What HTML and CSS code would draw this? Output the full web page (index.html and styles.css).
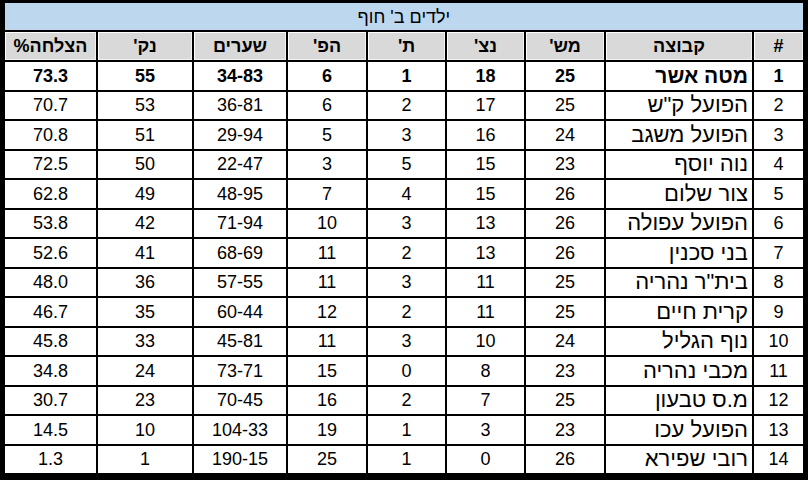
FILE: index.html
```html
<!DOCTYPE html>
<html lang="he" dir="rtl">
<head>
<meta charset="utf-8">
<title>ילדים ב' חוף</title>
<link rel="stylesheet" href="styles.css">
</head>
<body>
<table class="league">
  <colgroup>
    <col class="c-pos"><col class="c-team"><col class="c-n80"><col class="c-n79"><col class="c-n79"><col class="c-n80"><col class="c-goals"><col class="c-pts"><col class="c-pct">
  </colgroup>
  <thead>
    <tr class="title-row"><th colspan="9">ילדים ב' חוף</th></tr>
    <tr class="head-row">
      <th>#</th><th>קבוצה</th><th>מש'</th><th>נצ'</th><th>ת'</th><th>הפ'</th><th>שערים</th><th>נק'</th><th>הצלחה%</th>
    </tr>
  </thead>
  <tbody>
    <tr class="leader"><td>1</td><td class="team">מטה אשר</td><td>25</td><td>18</td><td>1</td><td>6</td><td>34-83</td><td>55</td><td>73.3</td></tr>
    <tr><td>2</td><td class="team">הפועל ק"ש</td><td>25</td><td>17</td><td>2</td><td>6</td><td>36-81</td><td>53</td><td>70.7</td></tr>
    <tr><td>3</td><td class="team">הפועל משגב</td><td>24</td><td>16</td><td>3</td><td>5</td><td>29-94</td><td>51</td><td>70.8</td></tr>
    <tr><td>4</td><td class="team">נוה יוסף</td><td>23</td><td>15</td><td>5</td><td>3</td><td>22-47</td><td>50</td><td>72.5</td></tr>
    <tr><td>5</td><td class="team">צור שלום</td><td>26</td><td>15</td><td>4</td><td>7</td><td>48-95</td><td>49</td><td>62.8</td></tr>
    <tr><td>6</td><td class="team">הפועל עפולה</td><td>26</td><td>13</td><td>3</td><td>10</td><td>71-94</td><td>42</td><td>53.8</td></tr>
    <tr><td>7</td><td class="team">בני סכנין</td><td>26</td><td>13</td><td>2</td><td>11</td><td>68-69</td><td>41</td><td>52.6</td></tr>
    <tr><td>8</td><td class="team">בית"ר נהריה</td><td>25</td><td>11</td><td>3</td><td>11</td><td>57-55</td><td>36</td><td>48.0</td></tr>
    <tr><td>9</td><td class="team">קרית חיים</td><td>25</td><td>11</td><td>2</td><td>12</td><td>60-44</td><td>35</td><td>46.7</td></tr>
    <tr><td>10</td><td class="team">נוף הגליל</td><td>24</td><td>10</td><td>3</td><td>11</td><td>45-81</td><td>33</td><td>45.8</td></tr>
    <tr><td>11</td><td class="team">מכבי נהריה</td><td>23</td><td>8</td><td>0</td><td>15</td><td>73-71</td><td>24</td><td>34.8</td></tr>
    <tr><td>12</td><td class="team">מ.ס טבעון</td><td>25</td><td>7</td><td>2</td><td>16</td><td>70-45</td><td>23</td><td>30.7</td></tr>
    <tr><td>13</td><td class="team">הפועל עכו</td><td>23</td><td>3</td><td>1</td><td>19</td><td>104-33</td><td>10</td><td>14.5</td></tr>
    <tr><td>14</td><td class="team">רובי שפירא</td><td>26</td><td>0</td><td>1</td><td>25</td><td>190-15</td><td>1</td><td>1.3</td></tr>
  </tbody>
</table>
</body>
</html>
```
FILE: styles.css
```css
html, body {
  margin: 0;
  padding: 0;
  background: #000;
}
body {
  padding: 3px 5px 7px 5px;
  font-family: "Liberation Sans", "DejaVu Sans", sans-serif;
  color: #000;
}
.league {
  width: 798px;
  height: 470px;
  border-collapse: collapse;
  table-layout: fixed;
  background: #fff;
  font-size: 18px;
}
.c-pos { width: 50px; }
.c-team { width: 148px; }
.c-n80 { width: 80px; }
.c-n79 { width: 79px; }
.c-goals { width: 94px; }
.c-pts { width: 96px; }
.c-pct { width: 92px; }

.league th, .league td {
  border: 2px solid #000;
  padding: 0 4px;
  text-align: center;
  vertical-align: middle;
  line-height: 1;
}
.title-row th {
  height: 27px;
  background: #bdd7ee;
  font-weight: normal;
  border-top: 0;
}
.head-row th {
  height: 28px;
  background: #d9d9d9;
  font-weight: bold;
  box-shadow: inset 1px 1px 0 #fff, inset -1px -1px 0 #f2f2f2;
}
.league tbody td {
  height: 27.36px;
}
.league tbody tr:last-child td {
  border-bottom: 0;
}
.league td.team {
  text-align: right;
  padding-right: 4px;
  font-size: 22px;
  white-space: nowrap;
}
.leader td.team {
  font-size: 21px;
}
.leader td {
  font-weight: bold;
}
.league tr > :first-child { border-right: 0; }
.league tr > :last-child { border-left: 0; }
```
